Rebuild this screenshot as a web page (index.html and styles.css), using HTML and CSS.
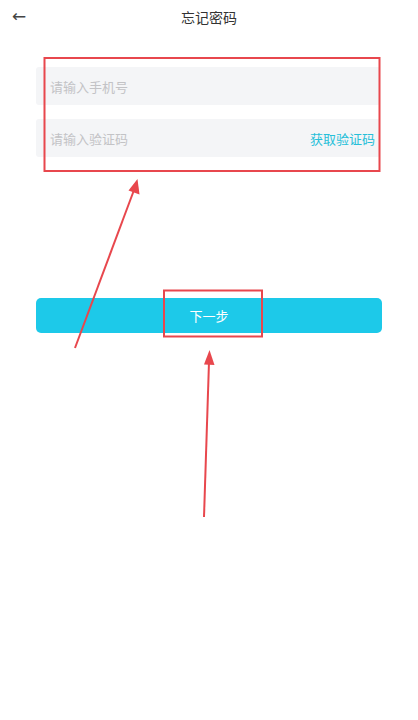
FILE: index.html
```html
<!DOCTYPE html>
<html lang="zh">
<head>
<meta charset="utf-8">
<title>忘记密码</title>
<link rel="stylesheet" href="styles.css">
</head>
<body>
<div class="page">
  <header class="topbar">
    <span class="back">←</span>
    <h1 class="title">忘记密码</h1>
  </header>
  <form class="form">
    <div class="field">
      <span class="placeholder">请输入手机号</span>
    </div>
    <div class="field">
      <span class="placeholder">请输入验证码</span>
      <span class="getcode">获取验证码</span>
    </div>
    <button type="button" class="next">下一步</button>
  </form>
  <svg class="annot" width="418" height="720" viewBox="0 0 418 720">
    <rect x="44.5" y="58" width="335" height="113" fill="none" stroke="#e8474d" stroke-width="2"/>
    <rect x="164" y="290.5" width="98" height="46" fill="none" stroke="#e8474d" stroke-width="2"/>
    <line x1="75" y1="348" x2="134" y2="190" stroke="#e8474d" stroke-width="2"/>
    <polygon points="137.5,179 139.5,194.5 128.5,190.5" fill="#e8474d"/>
    <line x1="204" y1="517" x2="209" y2="362" stroke="#e8474d" stroke-width="2"/>
    <polygon points="209.5,350 214.5,365 204,364.5" fill="#e8474d"/>
  </svg>
</div>
</body>
</html>
```
FILE: styles.css
```css
html, body {
  margin: 0;
  padding: 0;
  background: #ffffff;
}
body {
  font-family: "Noto Sans CJK SC", "Noto Sans", sans-serif;
}
.page {
  position: relative;
  width: 418px;
  height: 720px;
  overflow: hidden;
}
.topbar {
  position: relative;
  height: 33px;
  display: flex;
  align-items: center;
  justify-content: center;
}
.back {
  position: absolute;
  left: 12px;
  top: 6px;
  font-family: "DejaVu Sans", sans-serif;
  font-size: 17px;
  color: #444;
  line-height: 20px;
}
.title {
  margin: 0;
  font-size: 14px;
  font-weight: normal;
  color: #333;
  line-height: 20px;
}
.form {
  margin: 0;
  padding: 34px 36px 0 36px;
  display: flex;
  flex-direction: column;
}
.field {
  height: 38px;
  margin-right: 2px;
  background: #f4f5f7;
  border-radius: 3px;
  display: flex;
  align-items: center;
  justify-content: space-between;
  padding: 0 5px 0 14px;
  margin-bottom: 14px;
}
.placeholder {
  font-size: 13px;
  color: #c3c3c6;
}
.getcode {
  font-size: 13px;
  color: #27bfd9;
}
.next {
  margin-top: 127px;
  height: 35px;
  border: none;
  border-radius: 5px;
  background: #1dc9e9;
  color: #ffffff;
  font-family: "Noto Sans CJK SC", "Noto Sans", sans-serif;
  font-size: 13px;
  padding: 0;
}
.annot {
  position: absolute;
  left: 0;
  top: 0;
  pointer-events: none;
}
```
